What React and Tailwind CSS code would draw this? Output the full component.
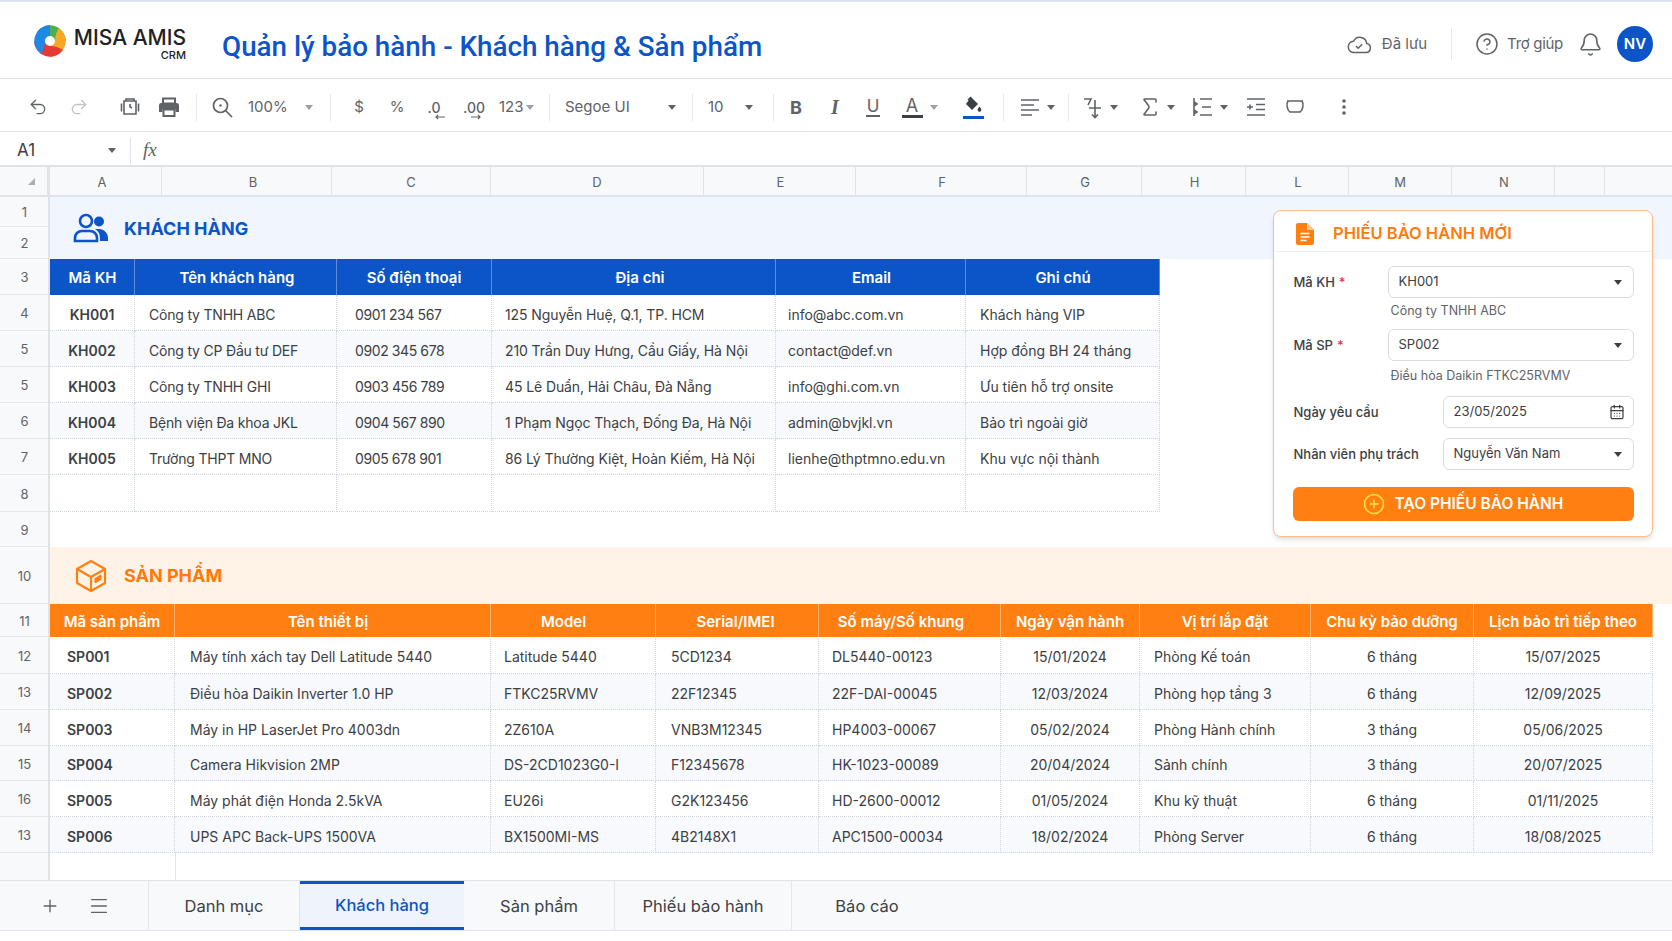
import React from 'react'
import { Undo2, Redo2, Bell, CircleHelp, Sigma, CalendarDays, Plus, Menu } from 'lucide-react'

const customers = [
  ['KH001', 'Công ty TNHH ABC', '0901 234 567', '125 Nguyễn Huệ, Q.1, TP. HCM', 'info@abc.com.vn', 'Khách hàng VIP'],
  ['KH002', 'Công ty CP Đầu tư DEF', '0902 345 678', '210 Trần Duy Hưng, Cầu Giấy, Hà Nội', 'contact@def.vn', 'Hợp đồng BH 24 tháng'],
  ['KH003', 'Công ty TNHH GHI', '0903 456 789', '45 Lê Duẩn, Hải Châu, Đà Nẵng', 'info@ghi.com.vn', 'Ưu tiên hỗ trợ onsite'],
  ['KH004', 'Bệnh viện Đa khoa JKL', '0904 567 890', '1 Phạm Ngọc Thạch, Đống Đa, Hà Nội', 'admin@bvjkl.vn', 'Bảo trì ngoài giờ'],
  ['KH005', 'Trường THPT MNO', '0905 678 901', '86 Lý Thường Kiệt, Hoàn Kiếm, Hà Nội', 'lienhe@thptmno.edu.vn', 'Khu vực nội thành'],
  ['', '', '', '', '', ''],
]

const products = [
  ['SP001', 'Máy tính xách tay Dell Latitude 5440', 'Latitude 5440', '5CD1234', 'DL5440-00123', '15/01/2024', 'Phòng Kế toán', '6 tháng', '15/07/2025'],
  ['SP002', 'Điều hòa Daikin Inverter 1.0 HP', 'FTKC25RVMV', '22F12345', '22F-DAI-00045', '12/03/2024', 'Phòng họp tầng 3', '6 tháng', '12/09/2025'],
  ['SP003', 'Máy in HP LaserJet Pro 4003dn', '2Z610A', 'VNB3M12345', 'HP4003-00067', '05/02/2024', 'Phòng Hành chính', '3 tháng', '05/06/2025'],
  ['SP004', 'Camera Hikvision 2MP', 'DS-2CD1023G0-I', 'F12345678', 'HK-1023-00089', '20/04/2024', 'Sảnh chính', '3 tháng', '20/07/2025'],
  ['SP005', 'Máy phát điện Honda 2.5kVA', 'EU26i', 'G2K123456', 'HD-2600-00012', '01/05/2024', 'Khu kỹ thuật', '6 tháng', '01/11/2025'],
  ['SP006', 'UPS APC Back-UPS 1500VA', 'BX1500MI-MS', '4B2148X1', 'APC1500-00034', '18/02/2024', 'Phòng Server', '6 tháng', '18/08/2025'],
]

const columns = [
  ['A', 'w-[112px] pr-[7px]'], ['B', 'w-[170px] pl-[13px]'], ['C', 'w-[159px]'], ['D', 'w-[213px]'], ['E', 'w-[152px] pl-[2px]'], ['F', 'w-[171px] pl-[2px]'],
  ['G', 'w-[115px] pl-[2px]'], ['H', 'w-[104px] pl-[2px]'], ['L', 'w-[103px] pl-[2px]'], ['M', 'w-[103px]'], ['N', 'w-[103px] pl-[2px]'], ['', 'w-[50px]'],
]

const rowHeaders = [
  ['1', 'h-[30px]'], ['2', 'h-[32px]'], ['3', 'h-[36px]'], ['4', 'h-[36px]'], ['5', 'h-[36px]'], ['5', 'h-[36px]'],
  ['6', 'h-[36px]'], ['7', 'h-[36px]'], ['8', 'h-[37px]'], ['9', 'h-[35px]'], ['10', 'h-[57px]'], ['11', 'h-[33px]'],
  ['12', 'h-[37px]'], ['13', 'h-[36px]'], ['14', 'h-[36px]'], ['15', 'h-[35px]'], ['16', 'h-[36px]'], ['13', 'h-[36px]'],
]

const customerHead = [
  ['Mã KH', 'pl-[1px]'], ['Tên khách hàng', 'pl-[3px]'], ['Số điện thoại', ''], ['Địa chỉ', 'pl-[13px]'], ['Email', 'pl-[2px]'], ['Ghi chú', 'pl-[1px]'],
]
const customerCell = [
  'justify-center font-semibold', 'pl-[14px] tracking-[-0.2px]', 'pl-[18px] tracking-[-0.4px]', 'pl-[13px] tracking-[-0.1px]', 'pl-[12px]', 'pl-[14px]',
]
const productHead = [
  ['Mã sản phẩm', ''], ['Tên thiết bị', 'pr-[9px]'], ['Model', 'pr-[19px]'], ['Serial/IMEI', 'pr-[3px]'], ['Số máy/Số khung', 'pr-[17px]'],
  ['Ngày vận hành', ''], ['Vị trí lắp đặt', ''], ['Chu kỳ bảo dưỡng', ''], ['Lịch bảo trì tiếp theo', ''],
]
const productCell = [
  'pl-[17px] font-semibold', 'pl-[15px]', 'pl-[13px]', 'pl-[15px]', 'pl-[13px]', 'justify-center', 'pl-[14px]', 'justify-center', 'justify-center',
]
const productRowHeight = ['h-[37px]', 'h-[36px]', 'h-[36px]', 'h-[35px]', 'h-[36px]', 'h-[36px]']

function Caret({ className = 'text-[#5f6368]' }) {
  return (
    <svg width="8" height="5" viewBox="0 0 8 5" className={className}>
      <path d="M0 0h8L4 5z" fill="currentColor" />
    </svg>
  )
}

function Slot({ className, children }) {
  return <div className={`flex items-center justify-center shrink-0 h-full ${className}`}>{children}</div>
}

function Divider({ className }) {
  return <div className={`w-px h-[27px] bg-[#e6e8eb] shrink-0 ${className}`} />
}

function Glyph({ children }) {
  return (
    <svg width="24" height="24" viewBox="0 0 24 24" fill="none" stroke="#5f6368" strokeWidth="1.6">
      {children}
    </svg>
  )
}

function Logo() {
  const blade = 'M4 8 A16 16 0 0 1 33 17 L22 17 A5 5 0 0 0 17 12 Q10 12 4 8 Z'
  return (
    <svg width="34" height="34" viewBox="0 0 34 34">
      <path d={blade} fill="#4caf50" />
      <path d={blade} fill="#f9a825" transform="rotate(90 17 17)" />
      <path d={blade} fill="#e53935" transform="rotate(180 17 17)" />
      <path d={blade} fill="#1e88e5" transform="rotate(270 17 17)" />
    </svg>
  )
}

function Header() {
  return (
    <header className="h-[79px] shrink-0 flex items-center pt-[8px] bg-white border-b border-[#dfe2e6] border-t-2 border-t-[#dde4ef]">
      <div className="ml-[33px] -mt-[7px]"><Logo /></div>
      <div className="ml-[7px] w-[112px] flex flex-col items-end text-[#202124]">
        <span className="text-[21px] leading-[21px] mt-[-1px] font-medium whitespace-nowrap">MISA AMIS</span>
        <span className="text-[11px] leading-[12px] mt-[1px] font-medium">CRM</span>
      </div>
      <h1 className="ml-[36px] mt-[6px] font-[Roboto,sans-serif] text-[27.800px] font-medium text-[#0b55c8] whitespace-nowrap">
        Quản lý bảo hành - Khách hàng &amp; Sản phẩm
      </h1>
      <div className="ml-auto flex items-center h-full">
        <svg width="26" height="20" viewBox="0 0 26 20" fill="none" stroke="#5f6368" strokeWidth="1.5">
          <path d="M7 18.500h13a4.500 4.500 0 0 0 .8-8.900A7 7 0 0 0 7.600 7.200 5.700 5.700 0 0 0 7 18.500z" />
          <path d="M10 12l2.200 2.200 4-4" />
        </svg>
        <span className="ml-[10px] text-[15px] text-[#5f6368]">Đã lưu</span>
        <div className="ml-[24px] w-px h-[32px] bg-[#e6e8eb]" />
        <CircleHelp className="ml-[23px] text-[#5f6368]" size={24} strokeWidth={1.5} />
        <span className="ml-[8px] text-[15px] text-[#5f6368] tracking-[-0.3px]">Trợ giúp</span>
        <Bell className="ml-[15px] text-[#5f6368]" size={25} strokeWidth={1.5} />
        <div className="ml-[14px] mr-[19px] w-[36px] h-[36px] rounded-full bg-[#0b55c8] text-white text-[15px] font-semibold flex items-center justify-center">NV</div>
      </div>
    </header>
  )
}

function Toolbar() {
  const text = 'text-[15px] text-[#5f6368]'
  return (
    <div className="h-[53px] shrink-0 flex items-center pl-[18px] pt-[4px] bg-white border-b border-[#dfe2e6]">
      <Slot className="w-[40px]"><Undo2 size={20} strokeWidth={1.6} className="text-[#5f6368]" /></Slot>
      <Slot className="w-[42px]"><Redo2 size={20} strokeWidth={1.6} className="text-[#bfc3c8]" /></Slot>
      <Slot className="w-[40px] ml-[10px]">
        <Glyph>
          <path d="M8 6V4h8v2M6 6h12v13H6zM3.500 8.500v8M20.500 8.500v8" />
          <path d="M12 9v3l2 1" />
        </Glyph>
      </Slot>
      <Slot className="w-[38px]">
        <svg width="22" height="22" viewBox="0 0 22 22">
          <path d="M5 2.500h12v5H5z" fill="none" stroke="#5f6368" strokeWidth="2" />
          <path d="M3 7h16a2.500 2.500 0 0 1 2 2.500V16h-3.500v-3h-13v3H1V9.500A2.500 2.500 0 0 1 3 7z" fill="#5f6368" />
          <path d="M5.500 13.500h11V20h-11z" fill="none" stroke="#5f6368" strokeWidth="2" />
        </svg>
      </Slot>
      <Divider className="ml-[8px]" />
      <Slot className="w-[50px]">
        <svg width="21" height="21" viewBox="0 0 21 21" fill="none" stroke="#5f6368" strokeWidth="1.700">
          <circle cx="8.500" cy="8.500" r="7" />
          <path d="M13.500 13.500l6.500 6.500" />
          <circle cx="8.500" cy="8.500" r="1.200" fill="#5f6368" stroke="none" />
        </svg>
      </Slot>
      <Slot className={`w-[44px] pl-[1px] justify-start ${text}`}>100%</Slot>
      <Slot className="w-[36px]"><Caret className="text-[#9aa0a6]" /></Slot>
      <Divider className="ml-[3px]" />
      <Slot className={`w-[38px] ml-[9px] ${text}`}>$</Slot>
      <Slot className={`w-[38px] ${text}`}>%</Slot>
      <Slot className="w-[36px]">
        <div className="relative text-[14px] text-[#5f6368] font-medium">
          .0
          <svg width="12" height="6" viewBox="0 0 12 6" fill="none" stroke="#5f6368" strokeWidth="1.2" className="absolute left-[6px] top-[17px]">
            <path d="M11 3H2M4 1L2 3l2 2" />
          </svg>
        </div>
      </Slot>
      <Slot className="w-[44px]">
        <div className="relative text-[14px] text-[#5f6368] font-medium">
          .00
          <svg width="12" height="6" viewBox="0 0 12 6" fill="none" stroke="#5f6368" strokeWidth="1.2" className="absolute left-[7px] top-[17px]">
            <path d="M1 3h9M8 1l2 2-2 2" />
          </svg>
        </div>
      </Slot>
      <Slot className={`w-[25px] ml-[3px] justify-start ${text}`}>123</Slot>
      <Slot className="w-[12px]"><Caret className="text-[#9aa0a6]" /></Slot>
      <Divider className="ml-[13px]" />
      <Slot className={`w-[100px] ml-[15px] justify-start ${text}`}>Segoe UI</Slot>
      <Slot className="w-[14px]"><Caret /></Slot>
      <Divider className="ml-[13px]" />
      <Slot className={`w-[34px] ml-[15px] justify-start ${text}`}>10</Slot>
      <Slot className="w-[14px]"><Caret /></Slot>
      <Divider className="ml-[17px]" />
      <Slot className="w-[44px] text-[18px] font-bold text-[#5f6368]">B</Slot>
      <Slot className="w-[34px] text-[20px] italic font-semibold text-[#5f6368] font-[Liberation_Serif,serif]">I</Slot>
      <Slot className="w-[42px]">
        <div className="flex flex-col items-center">
          <span className="text-[17px] leading-[18px] text-[#5f6368]">U</span>
          <span className="w-[14px] h-[1.5px] bg-[#5f6368]" />
        </div>
      </Slot>
      <Slot className="w-[36px]">
        <div className="flex flex-col items-center">
          <span className="text-[18px] leading-[19px] text-[#5f6368]">A</span>
          <span className="w-[21px] h-[3px] bg-[#3c4043]" />
        </div>
      </Slot>
      <Slot className="w-[8px]"><Caret className="text-[#9aa0a6]" /></Slot>
      <Slot className="w-[42px] ml-[14px]">
        <div className="flex flex-col items-center gap-[3px]">
          <svg width="20" height="17" viewBox="0 0 20 17">
            <path d="M8 1l7 7-6 6-6-6z" fill="#3c4043" />
            <path d="M8 1L5 4" stroke="#3c4043" strokeWidth="1.5" />
            <path d="M16.500 10.500l1.600 2.300a1.900 1.900 0 1 1-3.200 0z" fill="#3c4043" />
          </svg>
          <span className="w-[21px] h-[3px] bg-[#0b55c8]" />
        </div>
      </Slot>
      <Divider className="ml-[9px]" />
      <Slot className="w-[24px] ml-[14px]">
        <Glyph><path d="M3 5h18M3 10h13M3 15h18M3 20h11" /></Glyph>
      </Slot>
      <Slot className="w-[18px]"><Caret /></Slot>
      <Divider className="ml-[8px]" />
      <Slot className="w-[24px] ml-[12px]">
        <Glyph><path d="M3 4h7L7 10M14 5v17M8 13h12M11 19.500l3 3 3-3" /></Glyph>
      </Slot>
      <Slot className="w-[18px]"><Caret /></Slot>
      <Slot className="w-[24px] ml-[15px]"><Sigma size={24} strokeWidth={1.6} className="text-[#5f6368]" /></Slot>
      <Slot className="w-[18px]"><Caret /></Slot>
      <Slot className="w-[24px] ml-[11px]">
        <Glyph><path d="M9 4h12M9 20h12M11 12h9M3 3v18M3 7l3 2-3 2M3 15l3 2-3 2" /></Glyph>
      </Slot>
      <Slot className="w-[18px]"><Caret /></Slot>
      <Slot className="w-[24px] ml-[11px]">
        <Glyph><path d="M3 4h18M12 9.500h9M12 14.500h9M3 20h18M9 12H3M6 9.500v5" /></Glyph>
      </Slot>
      <Slot className="w-[24px] ml-[15px]">
        <Glyph><path d="M4 6h16M5 6c-2 3-1 9 2 11h10c3-2 4-8 2-11" /></Glyph>
      </Slot>
      <Slot className="w-[24px] ml-[25px]">
        <svg width="4" height="16" viewBox="0 0 4 16" fill="#5f6368">
          <circle cx="2" cy="2" r="1.8" />
          <circle cx="2" cy="8" r="1.8" />
          <circle cx="2" cy="14" r="1.8" />
        </svg>
      </Slot>
    </div>
  )
}

function FormulaBar() {
  return (
    <div className="h-[35px] shrink-0 flex items-center pt-[4px] bg-white border-b-2 border-[#dfe2e6]">
      <span className="ml-[17px] w-[91px] text-[17px] text-[#3c4043]">A1</span>
      <Caret />
      <div className="ml-[14px] w-px h-[26px] bg-[#dfe2e6]" />
      <span className="ml-[12px] font-[Liberation_Serif,serif] italic text-[19px] text-[#5f6368]">fx</span>
    </div>
  )
}

function ColumnHeader() {
  return (
    <div className="h-[30px] shrink-0 flex bg-[#f8f9fa] border-b-2 border-[#e0e3e7]">
      <div className="w-[50px] shrink-0 flex items-center justify-end pr-[12px] border-r-[3px] border-[#e0e3e7]">
        <svg width="7" height="7" viewBox="0 0 7 7"><path d="M7 0v7H0z" fill="#a8adb3" /></svg>
      </div>
      {columns.map(([label, width], i) => (
        <div key={i} className={`${width} shrink-0 flex items-center justify-center pt-[3px] text-[13px] text-[#5f6368] border-r border-[#e0e3e7]`}>
          {label}
        </div>
      ))}
    </div>
  )
}

function RowHeader() {
  return (
    <div className="w-[50px] shrink-0 flex flex-col bg-[#f8f9fa] border-r-[2px] border-[#dfe2e6]">
      {rowHeaders.map(([label, height], i) => (
        <div key={i} className={`${height} shrink-0 flex items-center justify-center pt-[3px] pl-[1px] text-[13px] text-[#5f6368] border-b border-[#e4e6e9]`}>
          {label}
        </div>
      ))}
    </div>
  )
}

function Band({ className, children }) {
  return <div className={`flex items-center shrink-0 ${className}`}>{children}</div>
}

function CustomerTable() {
  return (
    <div className="w-[1110px] grid grid-cols-[85px_202px_155px_284px_190px_194px] text-[14px] text-[#3c4043]">
      {customerHead.map(([h, offset]) => (
        <div key={h} className={`h-[36px] bg-[#0b55c8] text-white text-[15px] font-semibold flex items-center justify-center pt-[2px] border-r border-[#ffffff55] ${offset}`}>
          {h}
        </div>
      ))}
      {customers.map((row, r) =>
        row.map((cell, c) => (
          <div
            key={`${r}-${c}`}
            className={`${r === 5 ? 'h-[37px]' : 'h-[36px]'} ${r % 2 === 1 && r < 5 ? 'bg-[#f7f9fd]' : 'bg-white'} ${customerCell[c]} flex items-center pt-[3px] whitespace-nowrap border-r border-b border-dotted border-[#cfd5de]`}
          >
            {cell}
          </div>
        ))
      )}
    </div>
  )
}

function ProductTable() {
  return (
    <div className="w-[1603px] grid grid-cols-[125px_316px_165px_163px_182px_139px_171px_163px_179px] text-[14px] text-[#3c4043]">
      {productHead.map(([h, offset]) => (
        <div key={h} className={`h-[33px] bg-[#ff8010] text-white text-[15px] font-semibold whitespace-nowrap flex items-center justify-center pt-[3px] border-r border-[#ffffff66] ${offset}`}>
          {h}
        </div>
      ))}
      {products.map((row, r) =>
        row.map((cell, c) => (
          <div
            key={`${r}-${c}`}
            className={`${productRowHeight[r]} ${r % 2 === 1 ? 'bg-[#f7f9fd]' : 'bg-white'} ${productCell[c]} flex items-center pt-[3px] whitespace-nowrap border-r border-b border-dotted border-[#cfd5de]`}
          >
            {cell}
          </div>
        ))
      )}
    </div>
  )
}

function Field({ label, required, className, control }) {
  return (
    <div className={`flex items-center h-[32px] text-[13px] font-medium text-[#3c4043] ${className}`}>
      <span className="flex-1 pl-[1px] pt-[1px] whitespace-nowrap">
        {label}
        {required && <span className="text-[#e53935] ml-[4px]">*</span>}
      </span>
      {control}
    </div>
  )
}

function Select({ value, width, icon }) {
  return (
    <div className={`${width} h-full flex items-center justify-between pl-[10px] ${icon ? 'pr-[8px]' : 'pr-[11px]'} bg-white rounded-[6px] border-[1.5px] border-[#d9dce1] text-[13px] font-normal text-[#3c4043]`}>
      {value}
      {icon || <Caret className="text-[#3c4043]" />}
    </div>
  )
}

function WarrantyPanel() {
  return (
    <section className="absolute left-[1223px] top-[13px] w-[380px] h-[327px] bg-white rounded-[8px] border-[1.5px] border-[#ffbd8a] shadow-md flex flex-col">
      <div className="h-[41px] shrink-0 flex items-center pt-[5px] border-b border-[#eceef1]">
        <svg width="18" height="22" viewBox="0 0 18 22" className="ml-[22px]">
          <path d="M2 0h9l7 7v13a2 2 0 0 1-2 2H2a2 2 0 0 1-2-2V2a2 2 0 0 1 2-2z" fill="#ff8010" />
          <path d="M11 0l7 7h-7z" fill="#ffc599" />
          <path d="M4.500 10.500h9M4.500 14h9M4.500 17.500h6" stroke="#fff" strokeWidth="1.6" />
        </svg>
        <span className="ml-[19px] text-[16.500px] font-semibold text-[#ff7a0a] whitespace-nowrap">PHIẾU BẢO HÀNH MỚI</span>
      </div>
      <div className="px-[18.500px] pt-[14px] flex flex-col">
        <Field label="Mã KH" required control={<Select value="KH001" width="w-[246px]" />} />
        <p className="ml-[98px] h-[31px] pb-[4px] flex items-center text-[12.500px] text-[#5f6368]">Công ty TNHH ABC</p>
        <Field label="Mã SP" required control={<Select value="SP002" width="w-[246px]" />} />
        <p className="ml-[98px] h-[35px] pb-[4px] flex items-center text-[12.500px] text-[#5f6368]">Điều hòa Daikin FTKC25RVMV</p>
        <Field
          label="Ngày yêu cầu"
          control={<Select value="23/05/2025" width="w-[191px]" icon={<CalendarDays size={16} strokeWidth={1.8} className="text-[#3c4043]" />} />}
        />
        <Field label="Nhân viên phụ trách" className="mt-[10px]" control={<Select value="Nguyễn Văn Nam" width="w-[191px]" />} />
        <button className="mt-[17px] h-[34px] w-full rounded-[6px] bg-[#ff8010] text-white text-[15.500px] font-semibold flex items-center justify-center gap-[10px]">
          <svg width="22" height="22" viewBox="0 0 22 22" fill="none" stroke="#ffe14d" strokeWidth="1.500">
            <circle cx="11" cy="11" r="9.500" />
            <path d="M11 6.500v9M6.500 11h9" />
          </svg>
          TẠO PHIẾU BẢO HÀNH
        </button>
      </div>
    </section>
  )
}

function Tabs() {
  const tab = 'h-full flex items-center justify-center pt-[1px] text-[16.500px] text-[#3c4043] border-r border-[#e4e6e9]'
  return (
    <div className="h-[51px] shrink-0 flex bg-[#f8f9fa] border-t border-b border-[#e0e3e7]">
      <div className="w-[149px] flex items-center border-r border-[#e4e6e9] text-[#5f6368]">
        <Plus size={20} strokeWidth={1.6} className="ml-[40px]" />
        <Menu size={22} strokeWidth={1.5} className="ml-[28px]" />
      </div>
      <div className={`w-[151px] ${tab}`}>Danh mục</div>
      <div className="w-[164px] h-full flex items-center justify-center text-[16.500px] font-medium text-[#0b55c8] bg-[#eef3fc] border-t-[3px] border-b-[3px] border-[#0b55c8]">Khách hàng</div>
      <div className={`w-[151px] ${tab}`}>Sản phẩm</div>
      <div className={`w-[177px] ${tab}`}>Phiếu bảo hành</div>
      <div className="w-[150px] h-full flex items-center justify-center pt-[1px] text-[16.500px] text-[#3c4043]">Báo cáo</div>
    </div>
  )
}

export default function App() {
  return (
    <div className="w-[1672px] h-[941px] overflow-hidden flex flex-col bg-white font-[Inter,sans-serif]">
      <Header />
      <Toolbar />
      <FormulaBar />
      <ColumnHeader />
      <div className="h-[683px] shrink-0 flex overflow-hidden">
        <RowHeader />
        <main className="relative flex-1 flex flex-col">
          <Band className="h-[62px] bg-[#f1f5fd]">
            <svg width="36" height="30" viewBox="0 0 36 30" fill="none" className="ml-[23px] text-[#0b55c8]">
              <circle cx="13" cy="8" r="6" stroke="currentColor" strokeWidth="2.600" />
              <path d="M2 28v-3c0-4 3-7 7-7h8c4 0 7 3 7 7v3z" stroke="currentColor" strokeWidth="2.600" />
              <circle cx="26" cy="8.500" r="5" fill="currentColor" />
              <path d="M26 16c5 0 9 4 9 9v3h-8c0-5 0-9-5-12z" fill="currentColor" />
            </svg>
            <h2 className="ml-[15px] text-[18px] font-bold text-[#0b55c8]">KHÁCH HÀNG</h2>
          </Band>
          <CustomerTable />
          <div className="h-[35px] shrink-0" />
          <Band className="h-[57px] bg-[#fff3e8]">
            <svg width="34" height="34" viewBox="0 0 34 34" fill="none" stroke="#ff8010" strokeWidth="2.200" strokeLinejoin="round" className="ml-[24px]">
              <path d="M17 2l14 8v14l-14 8-14-8V10z" />
              <path d="M3 10l14 8 14-8M17 18v14" />
              <path d="M21.500 20l5-3v3l-5 3z" fill="#ff8010" />
            </svg>
            <h2 className="ml-[16px] text-[18px] font-bold text-[#ff7a0a]">SẢN PHẨM</h2>
          </Band>
          <ProductTable />
          <div className="flex-1 ml-[125px] border-l border-[#e4e6e9]" />
          <WarrantyPanel />
        </main>
      </div>
      <Tabs />
    </div>
  )
}
